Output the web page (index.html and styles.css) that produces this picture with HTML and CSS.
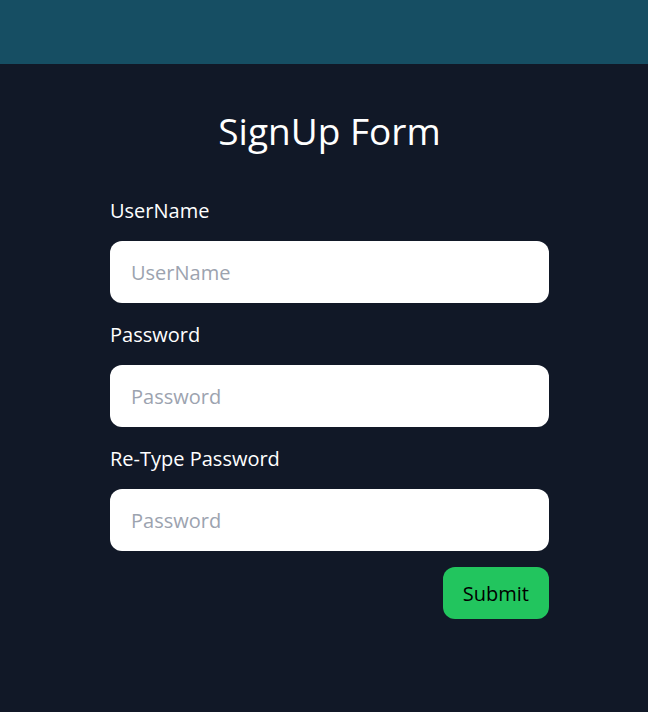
FILE: index.html
```html
<!DOCTYPE html>
<html lang="en">
<head>
<meta charset="utf-8">
<title>SignUp Form</title>
<link rel="stylesheet" href="styles.css">
</head>
<body>
<header class="topbar"></header>
<main class="page">
  <h1 class="title">SignUp Form</h1>
  <form class="form">
    <label class="label" for="u">UserName</label>
    <input class="field" id="u" type="text" placeholder="UserName">
    <label class="label" for="p">Password</label>
    <input class="field" id="p" type="password" placeholder="Password">
    <label class="label" for="r">Re-Type Password</label>
    <input class="field" id="r" type="password" placeholder="Password">
    <div class="actions"><button class="submit" type="button">Submit</button></div>
  </form>
</main>
</body>
</html>
```

FILE: styles.css
```css
* { box-sizing: border-box; }
html, body { margin: 0; padding: 0; }
body {
  background: #111827;
  font-family: "Open Sans", "Noto Sans", sans-serif;
  color: #ffffff;
  min-height: 712px;
}
.topbar {
  height: 64px;
  background: #164e63;
}
.page {
  display: flex;
  flex-direction: column;
  align-items: flex-start;
  padding-left: 110px;
}
.title {
  width: 439px;
  margin: 47px 0 0 0;
  font-size: 37px;
  line-height: 40px;
  font-weight: 400;
  text-align: center;
}
.form {
  width: 439px;
  display: flex;
  flex-direction: column;
  margin-top: 46px;
}
.label {
  font-size: 20px;
  line-height: 28px;
  margin-bottom: 16px;
}
.field {
  height: 62px;
  width: 100%;
  border: none;
  border-radius: 12px;
  background: #ffffff;
  padding: 0 21px;
  font-family: inherit;
  font-size: 20px;
  color: #111827;
  margin-bottom: 18px;
  outline: none;
}
.field::placeholder { color: #9ca3af; }
.field:last-of-type { margin-bottom: 16px; }
.actions {
  display: flex;
  justify-content: flex-end;
}
.submit {
  height: 52px;
  padding: 0 20px;
  border: none;
  border-radius: 12px;
  background: #22c55e;
  color: #000000;
  font-family: inherit;
  font-size: 20px;
}
```
